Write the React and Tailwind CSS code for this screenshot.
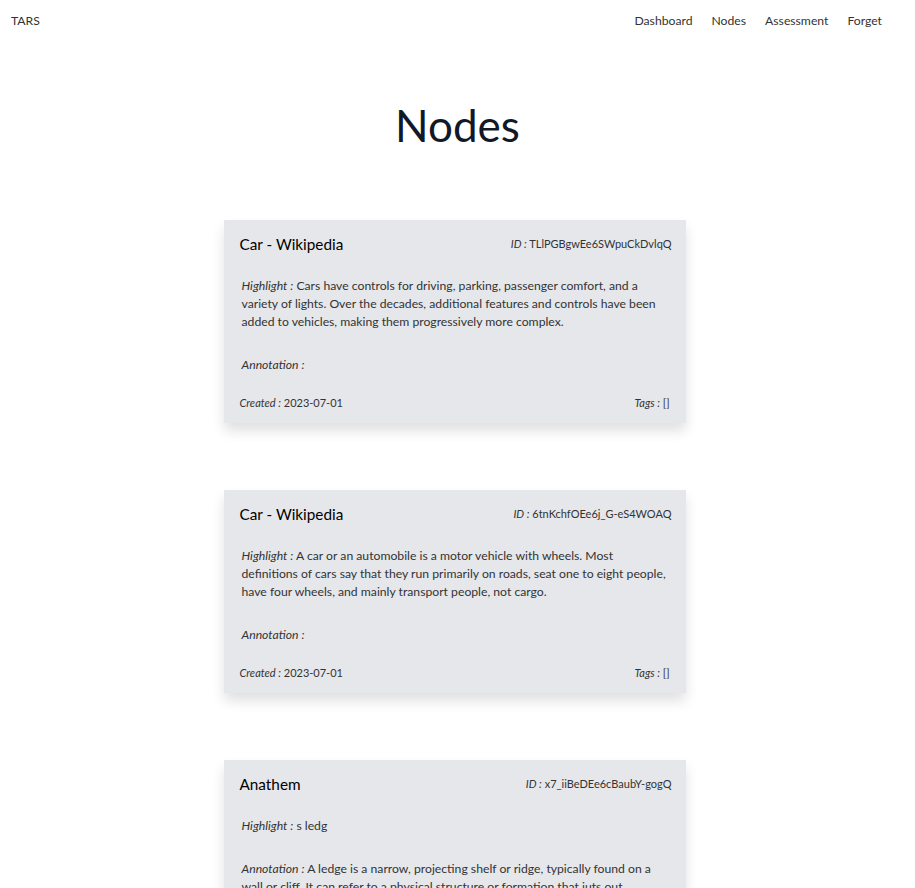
import React from "react";

const nodes = [
  {
    title: "Car - Wikipedia",
    id: "TLlPGBgwEe6SWpuCkDvlqQ",
    highlight:
      "Cars have controls for driving, parking, passenger comfort, and a variety of lights. Over the decades, additional features and controls have been added to vehicles, making them progressively more complex.",
    annotation: "",
    created: "2023-07-01",
    tags: "[]",
  },
  {
    title: "Car - Wikipedia",
    id: "6tnKchfOEe6j_G-eS4WOAQ",
    highlight:
      "A car or an automobile is a motor vehicle with wheels. Most definitions of cars say that they run primarily on roads, seat one to eight people, have four wheels, and mainly transport people, not cargo.",
    annotation: "",
    created: "2023-07-01",
    tags: "[]",
  },
  {
    title: "Anathem",
    id: "x7_iiBeDEe6cBaubY-gogQ",
    highlight: "s ledg",
    annotation:
      "A ledge is a narrow, projecting shelf or ridge, typically found on a wall or cliff. It can refer to a physical structure or formation that juts out horizontally from a vertical surface.",
    created: "2023-07-01",
    tags: "[]",
  },
];

const NodeCard = ({ node }) => (
  <div className="w-[462px] bg-[#e5e7eb] shadow-[0_8px_12px_rgba(0,0,0,0.12)] px-4 pt-[14px] pb-[12px]">
    <div className="flex items-start justify-between">
      <h3 className="text-[15.3px] leading-5 text-black">{node.title}</h3>
      <span className="-mr-[2px] text-[11px] leading-5 text-[#333]">
        <i>ID :</i> {node.id}
      </span>
    </div>
    <p className="mt-[23px] pl-[2px] text-[12.2px] leading-[18px] text-[#333]">
      <i>Highlight :</i> {node.highlight}
    </p>
    <p className="mt-[25px] pl-[2px] text-[12.2px] leading-[18px] text-[#333]">
      <i>Annotation :</i> {node.annotation}
    </p>
    <div className="mt-[21px] flex justify-between text-[11px] leading-4 text-[#333]">
      <span>
        <i>Created :</i> {node.created}
      </span>
      <span>
        <i>Tags :</i> {node.tags}
      </span>
    </div>
  </div>
);

export default function App() {
  return (
    <div className="min-h-screen bg-white font-['Lato',sans-serif]">
      <nav className="flex items-center justify-between px-[11px] h-[43px] text-[12.2px] text-[#333]">
        <span>TARS</span>
        <div className="flex gap-[19px] pr-[22px]">
          <a>Dashboard</a>
          <a>Nodes</a>
          <a>Assessment</a>
          <a>Forget</a>
        </div>
      </nav>

      <h1 className="mt-[55px] text-center text-[44px] leading-[54px] text-[#111827]">
        Nodes
      </h1>

      <div className="mt-[68px] pr-[6px] flex flex-col items-center gap-[67px] pb-16">
        {nodes.map((n) => (
          <NodeCard key={n.id} node={n} />
        ))}
      </div>
    </div>
  );
}
